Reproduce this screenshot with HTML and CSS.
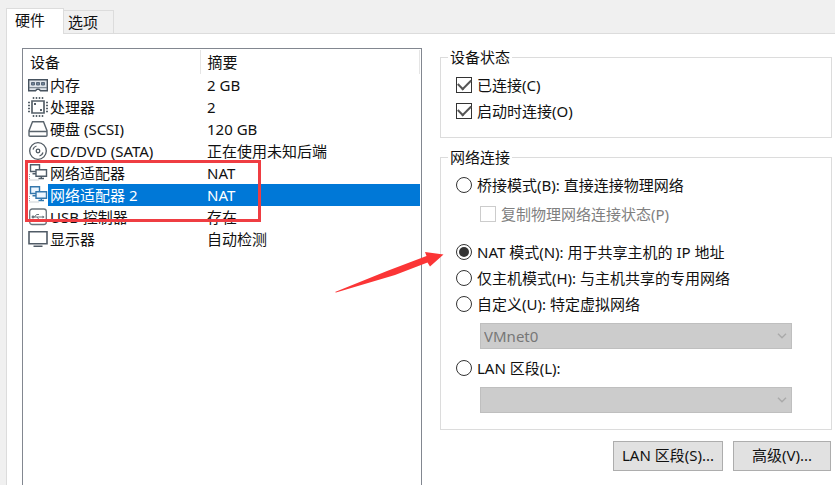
FILE: index.html
```html
<!DOCTYPE html>
<html lang="zh-CN">
<head>
<meta charset="utf-8">
<meta name="viewport" content="width=device-width, initial-scale=1">
<title>虚拟机设置</title>
<link rel="stylesheet" href="styles.css">
</head>
<body>
<nav class="tabs">
  <button type="button" class="tab tab-active">硬件</button>
  <button type="button" class="tab">选项</button>
</nav>
<main class="panel">
  <section class="devices">
    <table class="device-table">
      <colgroup><col class="col-icon"><col class="col-name"><col></colgroup>
      <thead>
        <tr><th colspan="2" scope="col">设备</th><th class="summary-head" scope="col">摘要</th></tr>
      </thead>
      <tbody>
        <tr>
          <td><svg class="icon" viewBox="0 0 20 20"><path d="M.7 4.700h18.600v11.100h-6.800l-1.500-1.500H9l-1.500 1.500H.7z" fill="#dfe5eb" stroke="#46525e" stroke-width="1.400"/><path d="M3.500 7.500h3v2.500h-3zM8.500 7.500h3v2.500h-3zM13.500 7.500h3v2.500h-3z" fill="#6f8299" stroke="#596878"/><path d="M1 12.700h18" stroke="#6c7884"/></svg></td>
          <td>内存</td><td>2 GB</td>
        </tr>
        <tr>
          <td><svg class="icon" viewBox="0 0 20 20" fill="none" stroke="#566069"><path d="M4 4h12v12H4z" stroke-width="1.700"/><path d="M5.500 0v2M8.500 0v2M11.500 0v2M14.500 0v2M5.500 18V20M8.500 18V20M11.500 18V20M14.500 18V20M0 5.500h2M0 8.500h2M0 11.500h2M0 14.500h2M18 5.500h2M18 8.500h2M18 11.500h2M18 14.500h2" stroke-width="1.500"/><path d="M6 7h2M12 13h2" stroke-width="2"/></svg></td>
          <td>处理器</td><td>2</td>
        </tr>
        <tr>
          <td><svg class="icon" viewBox="0 0 20 20" fill="none" stroke="#5a646d" stroke-width="1.400"><path d="M4.500 2.700h11l3.500 9v4.600q0 1-1 1H2q-1 0-1-1v-4.600zM1.500 12.500h17"/></svg></td>
          <td>硬盘 (SCSI)</td><td>120 GB</td>
        </tr>
        <tr>
          <td><svg class="icon" viewBox="0 0 20 20" fill="none" stroke="#505a63" stroke-width="1.300"><circle cx="10" cy="10" r="8.300"/><circle cx="10" cy="10" r="1.800"/><path d="M5 8.500Q5.700 5.800 8.500 5M15 11.500q-.7 2.700-3.500 3.500"/></svg></td>
          <td>CD/DVD (SATA)</td><td>正在使用未知后端</td>
        </tr>
        <tr>
          <td><svg class="icon" viewBox="0 0 20 20" fill="#fff" stroke="#505d69" stroke-width="1.400"><path d="M2.500 1.700h9v6.800h-9zM4.500 10.700H8"/><path d="M8 6.700h10.500v6.600H8zM13.300 13.300v2M10.500 15.500h5.500"/><path d="M1.500 11v6h9" fill="none" stroke="#98a2aa" stroke-width="1" stroke-dasharray="1 1"/></svg></td>
          <td>网络适配器</td><td>NAT</td>
        </tr>
        <tr class="selected">
          <td><svg class="icon" viewBox="0 0 20 20" fill="#edf6ff" stroke="#3577ac" stroke-width="1.400"><path d="M2.500 1.700h9v6.800h-9zM4.500 10.700H8"/><path d="M8 6.700h10.500v6.600H8zM13.300 13.300v2M10.500 15.500h5.500"/><path d="M1.500 11v6h9" fill="none" stroke="#98a2aa" stroke-width="1" stroke-dasharray="1 1"/></svg></td>
          <td>网络适配器 2</td><td>NAT</td>
        </tr>
        <tr>
          <td><svg class="icon" viewBox="0 0 20 20" fill="none" stroke="#69737b" stroke-width="1.300"><rect x="1.700" y="2" width="16.600" height="15.500" rx="2.500"/><path d="M4 10h12M6.500 10l2-2.500H11M9 10l2 2.500h2.500" stroke-width="1"/><circle cx="5" cy="10" r=".8"/><path d="M14.500 8.500l2 1.500-2 1.500z" fill="#69737b" stroke="none"/></svg></td>
          <td>USB 控制器</td><td>存在</td>
        </tr>
        <tr>
          <td><svg class="icon" viewBox="0 0 20 20" fill="none" stroke="#505b66" stroke-width="1.600"><path d="M1 2.700h18v12H1zM5.500 17.200h9"/></svg></td>
          <td>显示器</td><td>自动检测</td>
        </tr>
      </tbody>
    </table>
    <div class="highlight"></div>
    <svg class="arrow" viewBox="0 0 110 44"><path d="M0 42L52 21 91.500 6 90 2l18.500 2.500L95 16.500 92.500 12.500 60 25 1 42.500z" fill="#fb3536"/></svg>
  </section>

  <form class="settings">
    <fieldset class="group status">
      <legend>设备状态</legend>
      <label class="option"><input type="checkbox" checked>已连接(C)</label>
      <label class="option"><input type="checkbox" checked>启动时连接(O)</label>
    </fieldset>
    <fieldset class="group network">
      <legend>网络连接</legend>
      <label class="option"><input type="radio" name="mode">桥接模式(B): 直接连接物理网络</label>
      <label class="option option-sub"><input type="checkbox" disabled>复制物理网络连接状态(P)</label>
      <label class="option"><input type="radio" name="mode" checked>NAT 模式(N): 用于共享主机的 IP 地址</label>
      <label class="option"><input type="radio" name="mode">仅主机模式(H): 与主机共享的专用网络</label>
      <label class="option"><input type="radio" name="mode">自定义(U): 特定虚拟网络</label>
      <div class="dropdown">
        <select aria-label="特定虚拟网络" disabled><option>VMnet0</option></select>
        <svg class="chevron" viewBox="0 0 10 6"><path d="M1 .8l4 4 4-4"/></svg>
      </div>
      <label class="option"><input type="radio" name="mode">LAN 区段(L):</label>
      <div class="dropdown">
        <select aria-label="LAN 区段" disabled><option></option></select>
        <svg class="chevron" viewBox="0 0 10 6"><path d="M1 .8l4 4 4-4"/></svg>
      </div>
    </fieldset>
    <div class="actions">
      <button type="button" class="button button-lan">LAN 区段(S)...</button>
      <button type="button" class="button">高级(V)...</button>
    </div>
  </form>
</main>
</body>
</html>
```
FILE: styles.css
```css
* { box-sizing: border-box; }

body {
  margin: 0;
  min-height: 100vh;
  display: flex;
  flex-direction: column;
  padding: 8px 0 0 6px;
  background: #f0f0f0;
  color: #111;
  font: 15px/22px "Noto Sans", "Noto Sans CJK SC", sans-serif;
}

button, select, input { font: inherit; color: inherit; margin: 0; }

.tabs { display: flex; align-items: flex-end; }

.tab {
  height: 23px;
  padding: 0 15px 0 4px;
  border: 1px solid #dcdcdc;
  border-width: 1px 1px 0 0;
  background: #f0f0f0;
  line-height: 22px;
}

.tab-active {
  position: relative;
  height: 26px;
  margin-bottom: -1px;
  padding: 0 18px 3px 8px;
  border-left-width: 1px;
  background: #fff;
}

.panel {
  flex: 1;
  display: grid;
  grid-template-columns: minmax(0, 400px) minmax(0, 1fr);
  gap: 18px;
  padding: 14px 3px 0 15px;
  border: 1px solid #dcdcdc;
  border-width: 1px 0 0 1px;
  background: #fff;
}

.devices {
  position: relative;
  border: 1px solid #828790;
  border-bottom: 0;
  padding: 1px 1px 0 0;
}

.device-table { width: 100%; table-layout: fixed; border-collapse: collapse; }
.col-icon { width: 25px; }
.col-name { width: 152px; }

th { height: 24px; padding: 0 7px; text-align: left; font-weight: normal; }
.summary-head { border: 1px solid #e5e5e5; border-width: 0 1px; }

td { height: 22px; padding: 0; white-space: nowrap; }
td:nth-child(2) { padding-left: 2px; }
td:nth-child(3) { padding-left: 7px; }
.selected td:not(:first-child) { background: #0078d7; color: #fff; }

.icon { display: block; width: 20px; height: 20px; margin-left: 5px; }

.highlight {
  position: absolute;
  top: 111px;
  left: 2px;
  width: 236px;
  height: 62px;
  border: 3px solid #ef3d42;
}

.arrow {
  position: absolute;
  top: 201px;
  left: 312px;
  width: 110px;
  height: 44px;
}

.group {
  min-width: 0;
  margin: 0 0 10px;
  padding: 6px 15px 13px;
  border: 1px solid #dcdcdc;
}

.network { padding-bottom: 16px; }

legend { margin-left: -8px; padding: 0 2px; line-height: 18px; }

.option { display: flex; align-items: center; gap: 5px; height: 26px; white-space: nowrap; }
.option-sub { margin: 3px 0 12px 24px; color: #808080; }

input {
  appearance: none;
  flex: none;
  display: grid;
  place-items: center;
  width: 16px;
  height: 16px;
  border: 1px solid #333;
  background: #fff;
}

input[type="radio"] { border-radius: 50%; }
input[type="radio"]:checked::before {
  content: "";
  width: 10px;
  height: 10px;
  border-radius: 50%;
  background: #333;
}

input[type="checkbox"]:checked::before {
  content: "";
  width: 11px;
  height: 6px;
  margin-bottom: 4px;
  border: solid #555;
  border-width: 0 0 2px 2px;
  transform: rotate(-45deg);
}

input:disabled { border-color: #ccc; }

.dropdown { display: grid; align-items: center; margin: 6px 24px; }
.dropdown > * { grid-area: 1 / 1; }

select {
  appearance: none;
  width: 100%;
  height: 26px;
  padding: 0 3px;
  border: 1px solid #bfbfbf;
  border-radius: 0;
  background: #ccc;
  color: #777;
  opacity: 1;
}

select:disabled { opacity: 1; }

.chevron {
  justify-self: end;
  width: 10px;
  height: 6px;
  margin-right: 5px;
  fill: none;
  stroke: #aaa;
  stroke-width: 1.4;
  pointer-events: none;
}

.network .dropdown:last-child { margin-bottom: 0; }

.actions { display: flex; justify-content: flex-end; gap: 10px; padding: 1px 1px 0 0; }

.button {
  height: 30px;
  min-width: 98px;
  padding: 0 6px 2px;
  border: 1px solid #adadad;
  background: #e1e1e1;
  white-space: nowrap;
}

.button-lan { min-width: 110px; }
```
